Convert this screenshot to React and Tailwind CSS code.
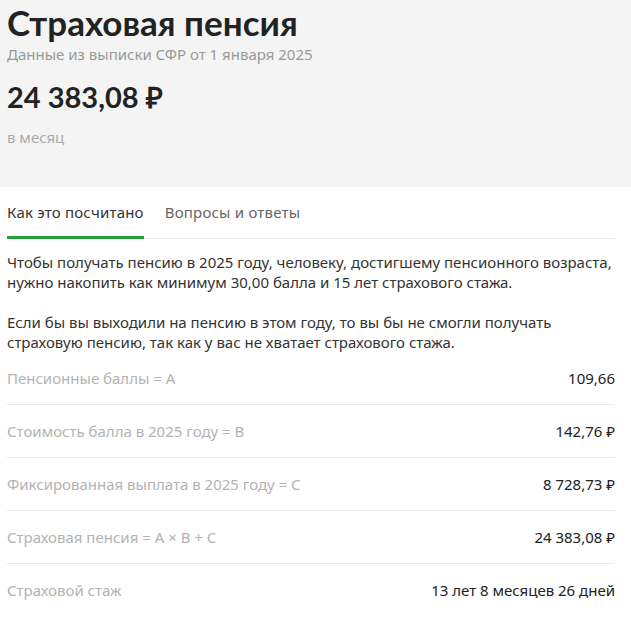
import React, { useState } from "react";

const rows = [
  { label: "Пенсионные баллы = A", value: "109,66" },
  { label: "Стоимость балла в 2025 году = B", value: "142,76 ₽" },
  { label: "Фиксированная выплата в 2025 году = C", value: "8 728,73 ₽" },
  { label: "Страховая пенсия = A × B + C", value: "24 383,08 ₽" },
  { label: "Страховой стаж", value: "13 лет 8 месяцев 26 дней" },
];

export default function App() {
  const [tab, setTab] = useState(0);

  return (
    <div className="min-h-screen bg-white font-['Noto_Sans',sans-serif] text-[#333]">
      {/* Header */}
      <div className="bg-[#f4f4f4] px-[7px] h-[187px]">
        <h1 className="pt-[1px] font-['Lato',sans-serif] font-bold text-[35px] leading-[42px] text-[#222]">
          Страховая пенсия
        </h1>
        <p className="mt-[1px] text-[15px] leading-[20px] text-[#999]">
          Данные из выписки СФР от 1 января 2025
        </p>
        <p className="mt-[15px] font-['Lato',sans-serif] font-bold text-[29px] leading-[36px] text-[#222]">
          24 383,08 ₽
        </p>
        <p className="mt-[12px] text-[15px] leading-[20px] text-[#aaa]">в месяц</p>
      </div>

      {/* Tabs */}
      <div className="px-[7px]">
        <div className="flex gap-[21px] border-b border-[#e8e8e8] mr-[9px]">
          {["Как это посчитано", "Вопросы и ответы"].map((t, i) => (
            <button
              key={t}
              onClick={() => setTab(i)}
              className={
                i === tab
                  ? "pt-[14px] pb-[13px] text-[15px] leading-[22px] tracking-[0.2px] text-[#333] border-b-[3px] border-[#21a038] -mb-px"
                  : "pt-[14px] pb-[13px] text-[15px] leading-[22px] tracking-[0.2px] text-[#666] border-b-[3px] border-transparent -mb-px"
              }
            >
              {t}
            </button>
          ))}
        </div>

        <div className="pt-[13px] text-[15px] leading-[20px] text-[#333] pr-[9px]">
          <p>
            Чтобы получать пенсию в 2025 году, человеку, достигшему пенсионного возраста,
            нужно накопить как минимум 30,00 балла и 15 лет страхового стажа.
          </p>
          <p className="mt-[20px]">
            Если бы вы выходили на пенсию в этом году, то вы бы не смогли получать
            страховую пенсию, так как у вас не хватает страхового стажа.
          </p>
        </div>

        <div className="mr-[9px]">
          {rows.map((r, i) => (
            <div
              key={r.label}
              className={
                i < rows.length - 1
                  ? "flex justify-between items-center h-[53px] border-b border-[#e8e8e8] text-[15px]"
                  : "flex justify-between items-center h-[53px] text-[15px]"
              }
            >
              <span className="text-[#b3b3b3]">{r.label}</span>
              <span className="text-[#222]">{r.value}</span>
            </div>
          ))}
        </div>
      </div>
    </div>
  );
}
